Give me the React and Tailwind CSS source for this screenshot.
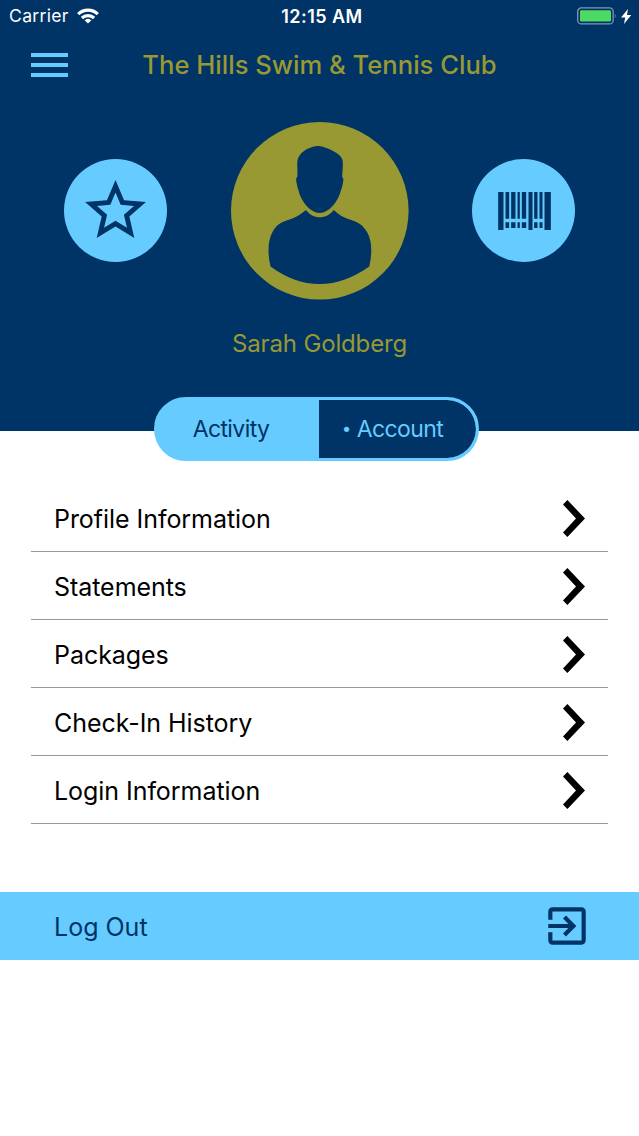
import { MdExitToApp, MdStarOutline } from 'react-icons/md';

const menuItems = [
  'Profile Information',
  'Statements',
  'Packages',
  'Check-In History',
  'Login Information',
];

const StatusBar = () => (
  <div className="grid h-8 grid-cols-3 items-center pl-[9px] pr-[7px] text-[17.6px] text-white">
    <div className="flex items-center gap-[8px]">
      <span className="tracking-[0.3px]">Carrier</span>
      <svg viewBox="0 0 22 16" className="h-4 w-[22px]" fill="none" stroke="currentColor" strokeWidth="3.2">
        <path d="M1.2 6.2a14 14 0 0 1 19.6 0" />
        <path d="M4.9 10a8.8 8.8 0 0 1 12.2 0" />
        <path d="M7.6 12.3a5 5 0 0 1 6.8 0L11 15.6z" fill="currentColor" stroke="none" />
      </svg>
    </div>
    <span className="pl-[3px] text-center text-[18px] font-semibold tracking-[0.45px]">12:15 AM</span>
    <div className="flex items-center justify-end gap-1">
      <svg viewBox="0 0 40 18" className="h-[18px] w-10">
        <rect x="0.7" y="0.9" width="35.4" height="16" rx="3.5" fill="none" stroke="#7f99b2" strokeWidth="1.3" />
        <rect x="3" y="3.2" width="31" height="11.4" rx="1.4" fill="#4cd964" />
        <path d="M37.8 6.2q1.8 2.7 0 5.4z" fill="#7f99b2" />
      </svg>
      <svg viewBox="0 0 11 15" className="h-[15px] w-[11px]" fill="currentColor">
        <path d="M7 0 0 8.600h4.200L3 15 10.300 6H6z" />
      </svg>
    </div>
  </div>
);

const Avatar = () => (
  <svg viewBox="0 0 178 178" className="h-[178px] w-[178px]">
    <circle cx="88.8" cy="88.8" r="88.8" fill="#999933" />
    <g fill="#003366">
      <path d="M86 24C77 25 67 31 66.300 39.500C66 45 66.800 50 66.300 54.700C64.800 55.500 64.900 58 65.800 62C66.300 65 67 67 67.700 69C69.500 78 79 91 88.700 91C98.500 91 107.800 78 109.700 69C111 66 112.500 60 112.300 56.500C111.800 55.500 111.300 55.200 111.200 54.700C111.300 49 112.500 43 111.500 38C110 32 102 29 97 26.500C93 25 89 23.500 86 24Z" />
      <path d="M75 88C79 93 83 95.300 88.700 95.300C94.500 95.300 98.500 93 102.800 88C107 92 111 95 117.300 97C128 100 132 103.500 136 110C141.500 119 141 133 138.300 144.500C122 156 106 162 88.700 162C71 162 55 156 39.500 144.500C36.700 133 36.400 119 41.500 110C45 103.500 49 100 60 97C66 95 70 92 75 88Z" />
    </g>
  </svg>
);

const Barcode = () => (
  <svg viewBox="0 0 158 114" className="ml-[2px] h-[38px] w-[53px]" fill="#003366">
    <path d="M0 0h16v114H0zM91 0h12v114H91zM139 0h19v114h-19z" />
    <path d="M22 0h11v80H22zM39 0h13v80H39zM58 0h7v80h-7zM71 0h13v80H71zM108 0h10v80h-10zM124 0h9v80h-9z" />
    <path d="M22 91h11v17H22zM39 91h13v17H39zM58 91h7v17h-7zM71 91h13v17H71zM108 91h10v17h-10zM124 91h9v17h-9z" />
  </svg>
);

const Chevron = () => (
  <svg viewBox="0 0 22 37" className="mt-[2px] h-[37px] w-[22px]" aria-hidden>
    <path d="M4.400 0 22 18.500 4.400 37 0 32.500 13 18.500 0 4.500z" />
  </svg>
);

const Header = () => (
  <header className="h-[431px] bg-[#003366] text-[#999933]">
    <StatusBar />
    <div className="flex h-[66px] items-center px-[31px]">
      <button className="flex w-[37px] flex-col gap-[6px]" aria-label="Menu">
        <span className="h-[4.3px] w-full bg-[#66ccff]" />
        <span className="h-[4.3px] w-full bg-[#66ccff]" />
        <span className="h-[4.3px] w-full bg-[#66ccff]" />
      </button>
      <h1 className="flex-1 pr-[37px] text-center text-[25.6px] font-medium">The Hills Swim &amp; Tennis Club</h1>
    </div>
    <div className="flex items-center justify-between px-16 pt-6">
      <button className="mb-px flex h-[103px] w-[103px] items-center justify-center rounded-full bg-[#66ccff]" aria-label="Favorites">
        <MdStarOutline className="mr-px h-[73px] w-[73px] text-[#003366]" />
      </button>
      <Avatar />
      <button className="mb-px flex h-[103px] w-[103px] items-center justify-center rounded-full bg-[#66ccff]" aria-label="Barcode">
        <Barcode />
      </button>
    </div>
    <p className="pt-[26px] text-center text-[24px] leading-9 tracking-[-0.15px]">Sarah Goldberg</p>
  </header>
);

const Tabs = () => (
  <div className="relative ml-[154px] -mt-[34px] flex h-16 w-[325px] overflow-hidden rounded-full border-[3px] border-[#66ccff] bg-[#66ccff] text-[23px] tracking-[-0.6px]">
    <button className="w-[162px] pr-[14px] text-[#003366]">Activity</button>
    <button className="flex flex-1 items-center justify-center gap-[6px] rounded-r-full bg-[#003366] pr-[10px] text-[#66ccff]">
      <span className="text-[17px]">•</span>
      Account
    </button>
  </div>
);

export default function App() {
  return (
    <div className="min-h-[1136px] w-[639px] bg-white font-['Inter','Liberation_Sans',sans-serif]">
      <Header />
      <Tabs />
      <ul className="mx-[31px] mt-[23px]">
        {menuItems.map((item) => (
          <li
            key={item}
            className="flex h-[68px] items-center justify-between border-b border-[#99999d] px-[23px] text-[25px] tracking-[-0.05px] text-black"
          >
            <span className="pt-[5px]">{item}</span>
            <Chevron />
          </li>
        ))}
      </ul>
      <button className="mt-[68px] flex h-[68px] w-full items-center justify-between bg-[#66ccff] pl-[54px] pr-[47px] text-[25px] text-[#003366]">
        <span className="pt-[3px]">Log Out</span>
        <MdExitToApp className="h-[50px] w-[50px]" />
      </button>
    </div>
  );
}
